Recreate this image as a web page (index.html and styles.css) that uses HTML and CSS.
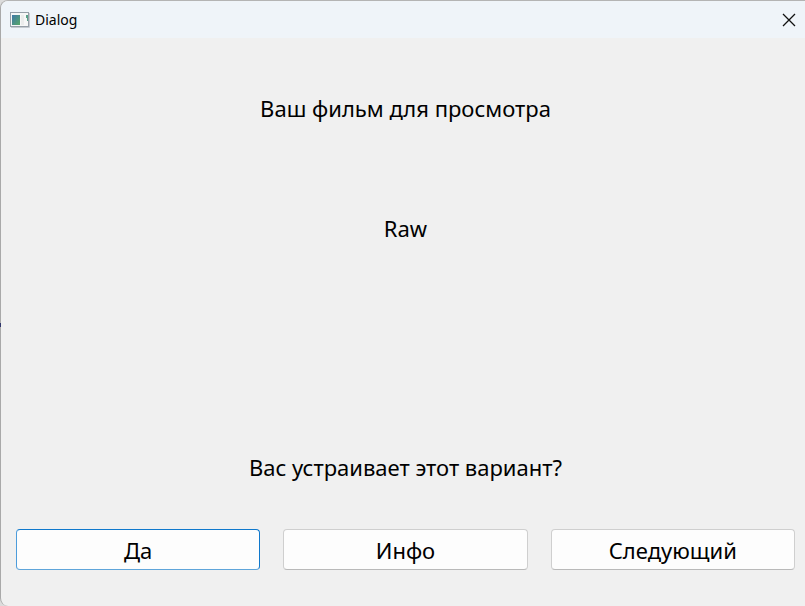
FILE: index.html
```html
<!DOCTYPE html>
<html lang="ru">
<head>
<meta charset="utf-8">
<title>Dialog</title>
<link rel="stylesheet" href="styles.css">
</head>
<body>
<main class="dialog">
  <header class="titlebar">
    <svg class="app-icon" viewBox="0 0 20 16" aria-hidden="true">
      <defs>
        <linearGradient id="screen" x1="0" y1="0" x2="1" y2="1">
          <stop offset="0" stop-color="#3f78a8"/>
          <stop offset="1" stop-color="#58a868"/>
        </linearGradient>
      </defs>
      <rect x="0.5" y="0.5" width="18" height="14" fill="#f6f7f7" stroke="#969fa8"/>
      <path d="M1 15.5h18.5V1" fill="none" stroke="#c5cad0"/>
      <rect x="2" y="3" width="8" height="10" fill="url(#screen)"/>
      <path d="M11 3h3v10h-3z" fill="#ebecec"/>
      <path d="M16 3h2v6h-1V6h-1z" fill="#58a088"/>
    </svg>
    <h1 class="title">Dialog</h1>
    <button class="close" type="button" aria-label="Закрыть">
      <svg class="close-icon" viewBox="0 0 12 12" aria-hidden="true">
        <path d="M0 0L12 12M12 0L0 12" stroke="#111" stroke-width="1.3"/>
      </svg>
    </button>
  </header>
  <section class="content">
    <p class="heading">Ваш фильм для просмотра</p>
    <p class="film">Raw</p>
    <p class="question">Вас устраивает этот вариант?</p>
    <div class="actions">
      <button class="action primary" type="button">Да</button>
      <button class="action" type="button">Инфо</button>
      <button class="action" type="button">Следующий</button>
    </div>
  </section>
</main>
<span class="edge-mark"></span>
</body>
</html>
```
FILE: styles.css
```css
* {
  box-sizing: border-box;
}

body {
  margin: 0;
  background: #dcdcdc;
  color: #000;
  font-family: "Noto Sans", "Open Sans", sans-serif;
}

.dialog {
  display: flex;
  flex-direction: column;
  min-height: 100vh;
  border-top: 1px solid #b4b4b4;
  border-left: 1px solid #a9a9a9;
  border-radius: 8px 0 0 8px;
  background: #f0f0f0;
  overflow: hidden;
}

.titlebar {
  display: flex;
  align-items: center;
  height: 37px;
  padding: 0 10px 0 9px;
  background: #eff4f9;
}

.app-icon {
  width: 20px;
  height: 16px;
}

.title {
  margin: 0 auto 0 5px;
  font-size: 14px;
  font-weight: 400;
  line-height: 20px;
}

.close {
  display: flex;
  padding: 0;
  border: 0;
  background: none;
}

.close-icon {
  width: 12px;
  height: 12px;
  overflow: visible;
}

.content {
  display: flex;
  flex: 1;
  flex-direction: column;
  padding: 54px 10px 36px 15px;
  text-align: center;
  font-size: 22px;
  line-height: 32px;
}

.heading,
.film,
.question {
  margin: 0;
}

.film {
  margin-top: 88px;
}

.question {
  margin-top: auto;
}

.actions {
  display: grid;
  grid-template-columns: repeat(3, 1fr);
  gap: 23px;
  margin-top: 46px;
}

.action {
  height: 41px;
  padding: 0 8px;
  border: 1px solid #cfcfcf;
  border-bottom-color: #b9b9b9;
  border-radius: 4px;
  background: #fdfdfd;
  color: #000;
  font: inherit;
}

.primary {
  border-color: #0f78cc;
  border-left-color: #4c9cdb;
  border-bottom-color: #5fa5da;
}

.edge-mark {
  position: absolute;
  top: 323px;
  left: 0;
  width: 1px;
  height: 4px;
  background: #30366b;
}
```
